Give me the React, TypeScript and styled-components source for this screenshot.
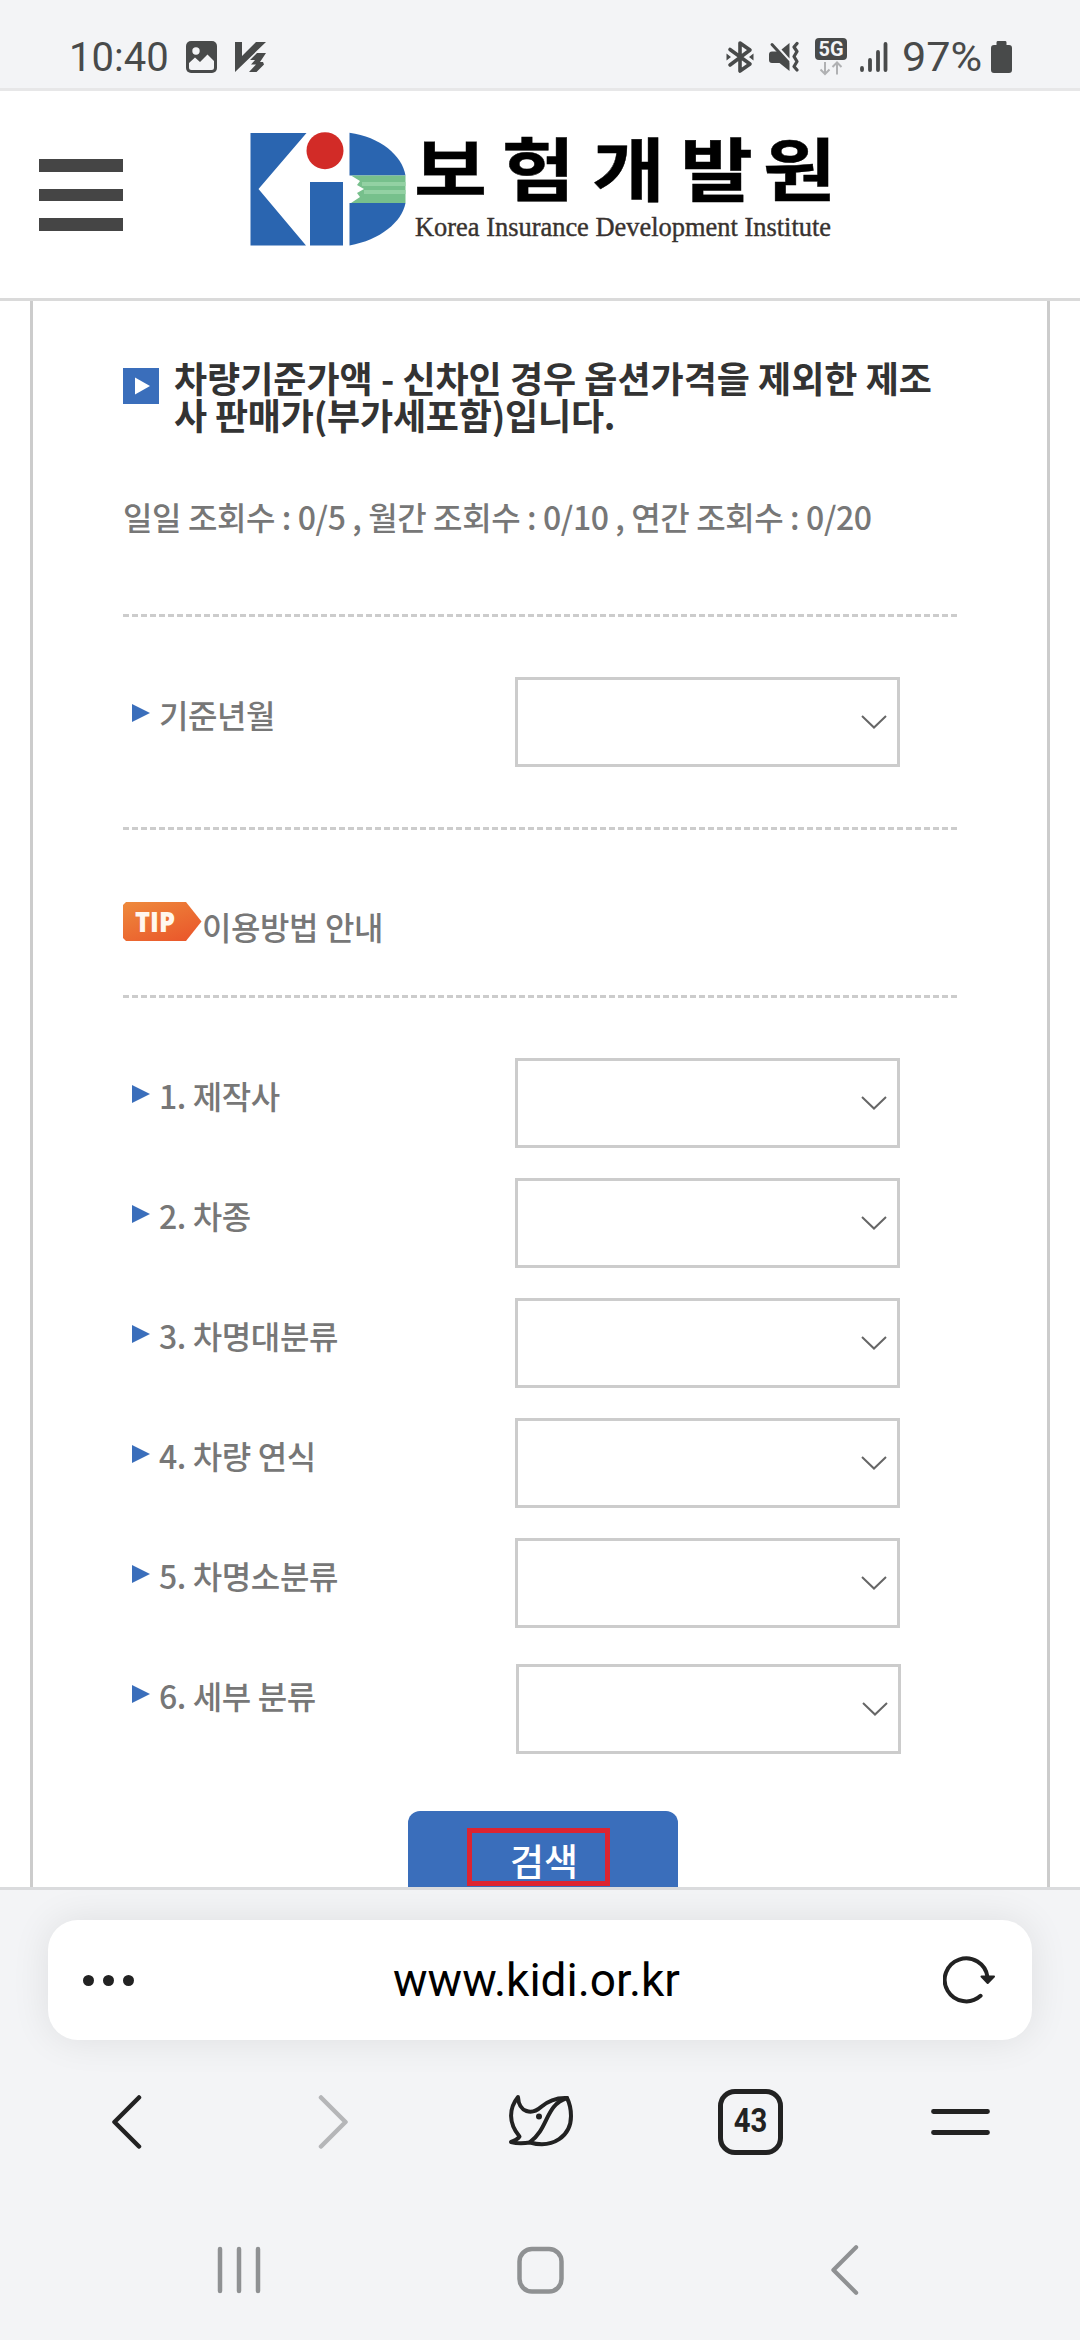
import React from 'react';
import styled, { createGlobalStyle } from 'styled-components';

const GlobalStyle = createGlobalStyle`
  *, *::before, *::after { box-sizing: border-box; }
  body { margin: 0; background: #f3f4f6; }
  h1, p { margin: 0; }
  button { border: 0; padding: 0; background: none; font: inherit; color: inherit; }
  svg { display: block; flex: none; }
`;

const korean = '"Noto Sans CJK KR", "Noto Sans", sans-serif';
const latin = 'Roboto, "Noto Sans CJK KR", sans-serif';

const Screen = styled.div`
  width: 1080px;
  height: 2340px;
  display: flex;
  flex-direction: column;
  overflow: hidden;
  background: #f3f4f6;
  font-family: ${korean};
`;

const StatusBar = styled.div`
  flex: none;
  height: 91px;
  padding: 24px 68px 0 69px;
  display: flex;
  justify-content: space-between;
  border-bottom: 3px solid #e7e7e8;
  background: #f3f4f6;
  color: #484a4a;
  font-family: ${latin};
`;

const StatusGroup = styled.div`
  display: flex;
  height: 66px;
  align-items: center;
`;

const StatusText = styled.span<{ $width: number; $stretch?: number }>`
  width: ${(p) => p.$width}px;
  font-size: 40px;
  line-height: 48px;
  transform: scaleX(${(p) => p.$stretch ?? 1});
  transform-origin: left center;
  padding-top: 1px;
  white-space: nowrap;
`;

const Header = styled.header`
  flex: none;
  height: 210px;
  padding: 0 0 0 39px;
  display: flex;
  border-bottom: 3px solid #dadada;
  background: #fff;
`;

const MenuButton = styled.button`
  width: 84px;
  padding-top: 68px;
  display: flex;
  flex-direction: column;
  gap: 17px;
`;

const MenuBar = styled.span`
  height: 12.7px;
  width: 84px;
  background: #454545;
`;

const LogoLink = styled.div`
  margin-left: 117px;
`;

const Page = styled.main`
  flex: none;
  height: 1586px;
  overflow: hidden;
  background: #fff;
  padding: 0 30px;
`;

const Panel = styled.div`
  height: 1700px;
  border: solid #ccc;
  border-width: 0 3px;
  padding: 0 90px;
  display: flex;
  flex-direction: column;
`;

const TitleRow = styled.div`
  display: flex;
  gap: 15px;
  padding-top: 58px;
`;

const TitleMark = styled.div`
  width: 36px;
  height: 36px;
  margin-top: 9px;
  display: grid;
  place-items: center;
  background: #3a6ebb;
`;

const Title = styled.h1`
  width: 770px;
  font-size: 36px;
  font-weight: 700;
  line-height: 37px;
  color: #333;
  white-space: nowrap;
`;

const TitleEnd = styled.span`
  letter-spacing: -0.2px;
`;

const Counts = styled.p`
  height: 48px;
  margin-top: 59px;
  font-size: 32px;
  font-weight: 500;
  line-height: 48px;
  letter-spacing: -0.4px;
  color: #777;
  white-space: nowrap;
`;

const Divided = styled.section<{ $height?: number; $gap?: number }>`
  ${(p) => (p.$height ? `height: ${p.$height}px;` : '')}
  margin-top: ${(p) => p.$gap ?? 0}px;
  border-top: 3px dashed #ccc;
  padding-top: 60px;
  display: flex;
  flex-direction: column;
`;

const TipRow = styled.div`
  display: flex;
  margin-top: 12px;
`;

const TipText = styled.span`
  font-size: 32px;
  font-weight: 500;
  line-height: 48px;
  letter-spacing: -0.4px;
  color: #777;
`;

const Field = styled.div`
  height: 120px;
  flex: none;
  display: grid;
  grid-template-columns: 9px 18px 9px 356px 1fr;
  align-items: start;
`;

const Arrow = styled.span`
  grid-column: 2;
  margin-top: 27px;
  width: 18px;
  height: 18px;
  background: #3a6ebb;
  clip-path: polygon(0 0, 100% 50%, 0 100%);
`;

const Label = styled.label`
  grid-column: 4;
  margin-top: 13px;
  font-size: 32px;
  font-weight: 500;
  line-height: 48px;
  letter-spacing: -0.4px;
  color: #777;
`;

const Select = styled.div<{ $shifted?: boolean }>`
  width: 385px;
  height: 90px;
  margin: ${(p) => (p.$shifted ? '6px 0 0 1px' : '0')};
  border: 3px solid #ccc;
  display: flex;
  justify-content: flex-end;
  padding: 35px 10px 0 0;
`;

const SearchButton = styled.button`
  width: 270px;
  height: 110px;
  margin: 33px 0 0 285px;
  padding: 17px 0 0 59px;
  border-radius: 12px;
  background: #3a6ebb;
  display: flex;
  align-items: flex-start;
`;

const SearchLabel = styled.span`
  width: 143px;
  height: 58px;
  border: 5px solid #dc2431;
  padding-left: 38px;
  font-size: 37px;
  font-weight: 500;
  line-height: 54px;
  text-align: left;
  color: #fff;
  white-space: nowrap;
`;

const BrowserBar = styled.footer`
  flex: 1;
  border-top: 3px solid #dadbdd;
  padding-top: 30px;
  display: flex;
  flex-direction: column;
  overflow: hidden;
  font-family: ${latin};
`;

const AddressBar = styled.div`
  flex: none;
  height: 120px;
  margin: 0 48px;
  border-radius: 30px;
  background: #fff;
  box-shadow: 0 0 38px rgba(0, 0, 0, 0.09);
  display: grid;
  grid-template-columns: 80px 1fr 89px;
  align-items: center;
`;

const Url = styled.span`
  padding-left: 2px;
  font-size: 46px;
  line-height: 60px;
  text-align: center;
  color: #000;
`;

const Dots = styled.span`
  display: flex;
  gap: 9px;
  padding-left: 34.5px;
`;

const Dot = styled.span`
  flex: none;
  width: 11px;
  height: 11px;
  border-radius: 50%;
  background: #222;
`;

const NavRow = styled.nav`
  flex: none;
  height: 64px;
  margin-top: 49px;
  padding-left: 24.5px;
  display: grid;
  grid-template-columns: 205px 206px 210px 210px 209px;
  place-items: center;
`;

const TabCount = styled.span`
  width: 65px;
  height: 66px;
  border: 5px solid #222;
  border-radius: 17px;
  display: grid;
  place-items: center;
  color: #222;
  font-size: 34px;
  font-weight: 700;
  line-height: 50px;
`;

const Condensed = styled.span`
  transform: scaleX(0.86);
  margin-top: -4px;
`;

const SystemRow = styled.nav`
  flex: none;
  height: 50px;
  margin-top: 92px;
  padding-left: 89px;
  display: grid;
  grid-template-columns: 300px 303px 306px;
  place-items: center;
`;

const ImageIcon = () => (
  <svg width="31" height="32" viewBox="0 0 31 32">
    <rect width="31" height="32" rx="5" fill="#484a4a" />
    <circle cx="10" cy="10" r="3.7" fill="#f3f4f6" />
    <path d="M3 22 9 16.5 14 21 21.5 13.5 28 20V26.5Q28 29 25.5 29H5.5Q3 29 3 26.5Z" fill="#f3f4f6" />
  </svg>
);

const ShieldIcon = () => (
  <svg width="31" height="31" viewBox="0 0 31 31" fill="#484a4a">
    <path d="M0 0H7V14L21 0H31L0 30Z" />
    <path d="M31 11H22L15 18H20L16 22.5H21L14 30H21.5L29 22.5 28 20H25L31 11Z" />
  </svg>
);

const BluetoothIcon = () => (
  <svg width="28" height="34" viewBox="0 0 28 34" fill="none" stroke="#484a4a" strokeWidth="3.6" strokeLinecap="round" strokeLinejoin="round">
    <path d="M4 9.5 24 24 14 31V3L24 10 4 25" />
    <path d="M0.5 13.5 5 17 0.5 20.5ZM27.5 13.5 23 17 27.5 20.5Z" fill="#484a4a" stroke="none" />
  </svg>
);

const MuteIcon = () => (
  <svg width="30" height="32" viewBox="0 0 30 32" fill="none" stroke="#484a4a" strokeWidth="3" strokeLinecap="round" strokeLinejoin="round">
    <path d="M3 10.500H9.500L20.500 22V30L10.500 22H3Q0 22 0 19V13.500Q0 10.500 3 10.500Z" fill="#484a4a" stroke="none" />
    <path d="M20.500 2V17.500L12.500 8.500Z" fill="#484a4a" stroke="none" />
    <path d="M3 3.500 19 21" />
    <path d="M28 2.500 25 6 28 10.500 25 15.500 28 20.500 25 25.500 28 29" strokeWidth="3.200" />
  </svg>
);

const NetworkIcon = () => (
  <svg width="32" height="38" viewBox="0 0 32 38">
    <rect width="32" height="22" rx="4" fill="#484a4a" />
    <text x="16" y="18.3" textAnchor="middle" textLength="25" lengthAdjust="spacingAndGlyphs" fontFamily="Roboto, sans-serif" fontWeight="700" fontSize="20" fill="#f3f4f6">5G</text>
    <path d="M10 24V36M5.500 31.500 10 36 14.500 31.500M22 36.500V24.500M17.500 29 22 24.500 26.500 29" fill="none" stroke="#b0b1b3" strokeWidth="2" />
  </svg>
);

const SignalIcon = () => (
  <svg width="28" height="30" viewBox="0 0 28 30" stroke="#484a4a" strokeWidth="3.8" strokeLinecap="round">
    <path d="M2 26V28M10 18V28M18 10V28M25.500 2V28" />
  </svg>
);

const BatteryIcon = () => (
  <svg width="21" height="32" viewBox="0 0 21 32">
    <path d="M6.500 0H14.500Q15.500 0 15.500 1.500V4H18Q21 4 21 7V29Q21 32 18 32H3Q0 32 0 29V7Q0 4 3 4H5.500V1.500Q5.500 0 6.500 0Z" fill="#484a4a" />
  </svg>
);

const Gap = styled.span<{ $w: number }>`
  flex: none;
  width: ${(p) => p.$w}px;
`;

const Logo = () => (
  <svg width="610" height="190" viewBox="240 91 610 190">
    <path d="M250.500 133H306.500L258.500 189 306 245.500H250.500Z" fill="#2a65b0" />
    <rect x="310" y="182" width="33" height="63.500" fill="#2a65b0" />
    <circle cx="325" cy="150.700" r="18.500" fill="#d22b27" />
    <path d="M349.500 132.700C380 137 402 155 405.500 175.500H349.500Z" fill="#2a65b0" />
    <path d="M349.500 245.500C380 240 402 222 405.500 203H349.500Z" fill="#2a65b0" />
    <path d="M351 175.500H405.500V203H351L360 197 357 193 364 189 357 185 360 181Z" fill="#77c08c" />
    <path d="M362 182H405.500V186H362ZM364 190H405.500V194H364Z" fill="#93d1a3" />
    {[
      ['보', 414],
      ['험', 502],
      ['개', 592],
      ['발', 680],
      ['원', 763],
    ].map(([char, x]) => (
      <text key={char} x={x} y="195.500" textLength="73" lengthAdjust="spacingAndGlyphs" fontFamily="Noto Sans CJK KR, sans-serif" fontWeight="700" fontSize="69" fill="#000" stroke="#000" strokeWidth="0.4">
        {char}
      </text>
    ))}
    <text x="415" y="236" textLength="416" lengthAdjust="spacingAndGlyphs" fontFamily="Liberation Serif, serif" fontSize="27" fill="#38322f" stroke="#38322f" strokeWidth="0.4">
      Korea Insurance Development Institute
    </text>
  </svg>
);

const TipBadge = () => (
  <svg width="79" height="39" viewBox="0 0 79 39">
    <defs>
      <linearGradient id="tip" x1="0" y1="0" x2="0.7" y2="1">
        <stop offset="0" stopColor="#ee8a3c" />
        <stop offset="1" stopColor="#ea5a2c" />
      </linearGradient>
    </defs>
    <path d="M3 0H63L78.500 19.500 63 39H3L0 36V3Z" fill="url(#tip)" />
    <text x="12" y="30" textLength="40" lengthAdjust="spacingAndGlyphs" fontFamily="Open Sans, sans-serif" fontWeight="800" fontSize="29" fill="#fff7ee">TIP</text>
  </svg>
);

const Chevron = () => (
  <svg width="26" height="14" viewBox="0 0 26 14" fill="none" stroke="#666" strokeWidth="2">
    <path d="M1 1 13 12.500 25 1" />
  </svg>
);

const ReloadIcon = () => (
  <svg width="54" height="50" viewBox="0 0 54 50">
    <path d="M37.600 40.800A21.500 21.500 0 1 1 44.500 22" fill="none" stroke="#222" strokeWidth="4" strokeLinecap="round" />
    <path d="M38.500 21.500H51L44.700 28Z" fill="#222" stroke="#222" strokeWidth="2" strokeLinejoin="round" />
  </svg>
);

const Caret = ({ color, flip, w = 30, h = 54 }: { color: string; flip?: boolean; w?: number; h?: number }) => (
  <svg width={w} height={h} viewBox="0 0 30 54" fill="none" stroke={color} strokeWidth="4.500" strokeLinecap="round" strokeLinejoin="round">
    <path d={flip ? 'M3 2.500 27.500 27 3 51.500' : 'M27 2.500 2.500 27 27 51.500'} />
  </svg>
);

const BirdIcon = () => (
  <svg width="66" height="56" viewBox="17 14 66 56" fill="none" stroke="#222" strokeWidth="4" strokeLinecap="round" strokeLinejoin="round">
    <path d="M27 17C18 28 17 43 28.500 56.500C26 60 23 61 20 62C27 64 33 63.500 39 62.500C62 69 80 56 80 36C80 29 78.500 23 76 18C66 17.500 58 20 50 27C41 35 28 33 27 17Z" />
    <path d="M76 18C54 25 58 48 39 62" />
    <circle cx="48" cy="36.500" r="3" fill="#222" stroke="none" />
  </svg>
);

const MoreIcon = () => (
  <svg width="59" height="28" viewBox="0 0 59 28" stroke="#222" strokeWidth="4.800" strokeLinecap="round">
    <path d="M2.500 3.500H56.500M2.500 24.500H56.500" />
  </svg>
);

const RecentsIcon = () => (
  <svg width="44" height="48" viewBox="0 0 44 48" stroke="#8f9193" strokeWidth="4.500" strokeLinecap="round">
    <path d="M3 3V45M22 3V45M41 3V45" />
  </svg>
);

const HomeIcon = () => (
  <svg width="47" height="48" viewBox="0 0 47 48" fill="none" stroke="#8f9193" strokeWidth="4.500">
    <rect x="2.500" y="3" width="42" height="42.500" rx="12.500" />
  </svg>
);

const criteria = ['1. 제작사', '2. 차종', '3. 차명대분류', '4. 차량 연식', '5. 차명소분류', '6. 세부 분류'];

function SelectField({ label, shifted }: { label: string; shifted?: boolean }) {
  return (
    <Field>
      <Arrow />
      <Label>{label}</Label>
      <Select $shifted={shifted}>
        <Chevron />
      </Select>
    </Field>
  );
}

export default function App() {
  return (
    <Screen>
      <GlobalStyle />
      <StatusBar>
        <StatusGroup>
          <StatusText $width={117}>10:40</StatusText>
          <ImageIcon />
          <Gap $w={18} />
          <ShieldIcon />
        </StatusGroup>
        <StatusGroup>
          <BluetoothIcon />
          <Gap $w={15} />
          <MuteIcon />
          <Gap $w={16} />
          <NetworkIcon />
          <Gap $w={13} />
          <SignalIcon />
          <Gap $w={14} />
          <StatusText $width={89} $stretch={1.08}>97%</StatusText>
          <BatteryIcon />
        </StatusGroup>
      </StatusBar>

      <Header>
        <MenuButton aria-label="menu">
          <MenuBar />
          <MenuBar />
          <MenuBar />
        </MenuButton>
        <LogoLink>
          <Logo />
        </LogoLink>
      </Header>

      <Page>
        <Panel>
          <TitleRow>
            <TitleMark>
              <svg width="36" height="36" viewBox="0 0 36 36">
                <path d="M12 9.500 27 18 12 26.500Z" fill="#fff" />
              </svg>
            </TitleMark>
            <Title>
              차량기준가액 - 신차인 경우 옵션가격을 제외한 제조
              <br />
              <TitleEnd>사 판매가(부가세포함)입니다.</TitleEnd>
            </Title>
          </TitleRow>
          <Counts>일일 조회수 : 0/5 , 월간 조회수 : 0/10 , 연간 조회수 : 0/20</Counts>

          <Divided $height={213} $gap={74}>
            <SelectField label="기준년월" />
          </Divided>

          <Divided $height={168}>
            <TipRow>
              <TipBadge />
              <TipText>이용방법 안내</TipText>
            </TipRow>
          </Divided>

          <Divided>
            {criteria.map((label, i) => (
              <SelectField key={label} label={label} shifted={i === criteria.length - 1} />
            ))}
          </Divided>

          <SearchButton>
            <SearchLabel>검색</SearchLabel>
          </SearchButton>
        </Panel>
      </Page>

      <BrowserBar>
        <AddressBar>
          <Dots>
            <Dot />
            <Dot />
            <Dot />
          </Dots>
          <Url>www.kidi.or.kr</Url>
          <ReloadIcon />
        </AddressBar>
        <NavRow>
          <Caret color="#222" />
          <Caret color="#b5b6b8" flip />
          <BirdIcon />
          <TabCount>
            <Condensed>43</Condensed>
          </TabCount>
          <MoreIcon />
        </NavRow>
        <SystemRow>
          <RecentsIcon />
          <HomeIcon />
          <Caret color="#8f9193" w={28} h={50} />
        </SystemRow>
      </BrowserBar>
    </Screen>
  );
}
